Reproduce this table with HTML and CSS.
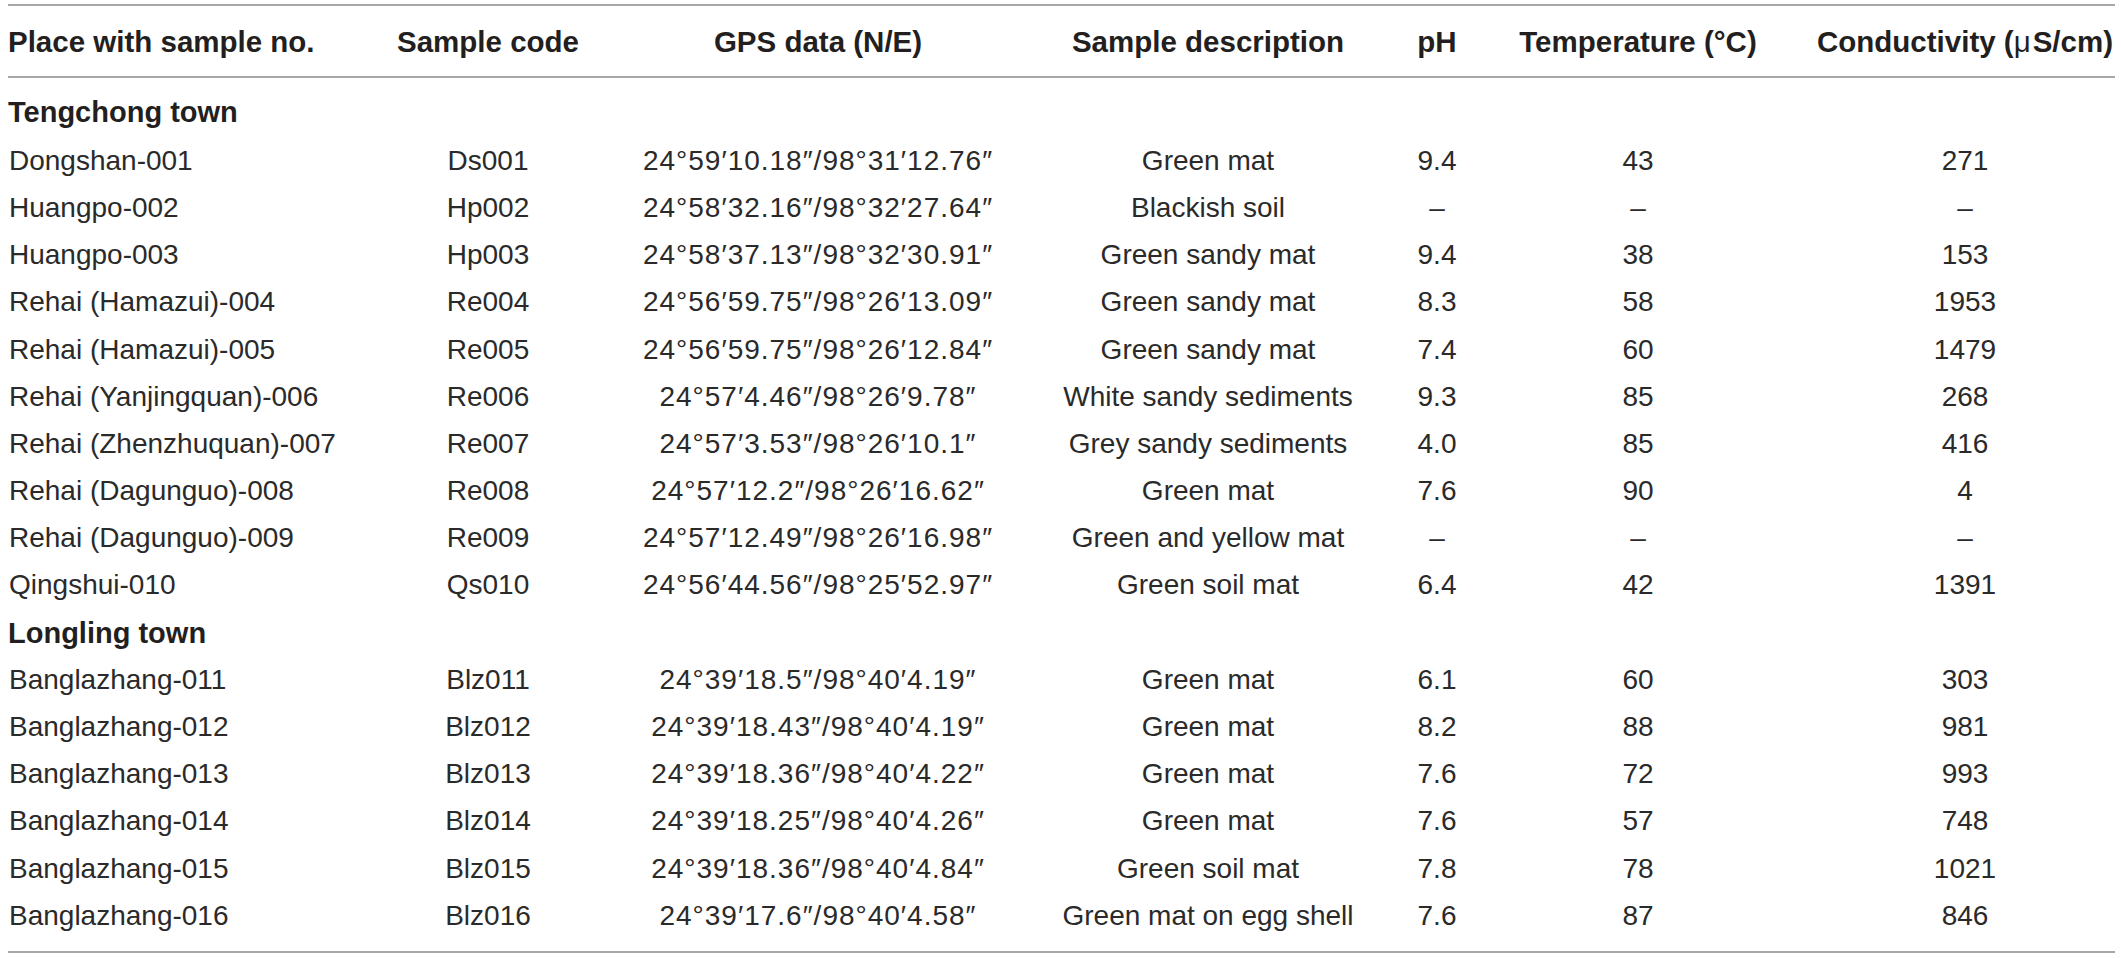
FILE: index.html
```html
<!DOCTYPE html>
<html lang="en">
<head>
<meta charset="utf-8">
<title>Sampling sites</title>
<link rel="stylesheet" href="styles.css">
</head>
<body>
<div class="page">
<table class="tbl">
  <colgroup>
    <col class="w-place"><col class="w-code"><col class="w-gps"><col class="w-desc"><col class="w-ph"><col class="w-temp"><col class="w-cond">
  </colgroup>
  <thead>
    <tr>
      <th class="left">Place with sample no.</th>
      <th>Sample code</th>
      <th>GPS data (N/E)</th>
      <th>Sample description</th>
      <th>pH</th>
      <th>Temperature (°C)</th>
      <th>Conductivity (<span class="mu">μ</span>S/cm)</th>
    </tr>
  </thead>
  <tbody>
    <tr class="group first"><td colspan="7">Tengchong town</td></tr>
    <tr><td>Dongshan-001</td><td>Ds001</td><td class="gps">24°59′10.18″/98°31′12.76″</td><td>Green mat</td><td>9.4</td><td>43</td><td>271</td></tr>
    <tr><td>Huangpo-002</td><td>Hp002</td><td class="gps">24°58′32.16″/98°32′27.64″</td><td>Blackish soil</td><td>–</td><td>–</td><td>–</td></tr>
    <tr><td>Huangpo-003</td><td>Hp003</td><td class="gps">24°58′37.13″/98°32′30.91″</td><td>Green sandy mat</td><td>9.4</td><td>38</td><td>153</td></tr>
    <tr><td>Rehai (Hamazui)-004</td><td>Re004</td><td class="gps">24°56′59.75″/98°26′13.09″</td><td>Green sandy mat</td><td>8.3</td><td>58</td><td>1953</td></tr>
    <tr><td>Rehai (Hamazui)-005</td><td>Re005</td><td class="gps">24°56′59.75″/98°26′12.84″</td><td>Green sandy mat</td><td>7.4</td><td>60</td><td>1479</td></tr>
    <tr><td>Rehai (Yanjingquan)-006</td><td>Re006</td><td class="gps">24°57′4.46″/98°26′9.78″</td><td>White sandy sediments</td><td>9.3</td><td>85</td><td>268</td></tr>
    <tr><td>Rehai (Zhenzhuquan)-007</td><td>Re007</td><td class="gps">24°57′3.53″/98°26′10.1″</td><td>Grey sandy sediments</td><td>4.0</td><td>85</td><td>416</td></tr>
    <tr><td>Rehai (Dagunguo)-008</td><td>Re008</td><td class="gps">24°57′12.2″/98°26′16.62″</td><td>Green mat</td><td>7.6</td><td>90</td><td>4</td></tr>
    <tr><td>Rehai (Dagunguo)-009</td><td>Re009</td><td class="gps">24°57′12.49″/98°26′16.98″</td><td>Green and yellow mat</td><td>–</td><td>–</td><td>–</td></tr>
    <tr><td>Qingshui-010</td><td>Qs010</td><td class="gps">24°56′44.56″/98°25′52.97″</td><td>Green soil mat</td><td>6.4</td><td>42</td><td>1391</td></tr>
    <tr class="group"><td colspan="7">Longling town</td></tr>
    <tr><td>Banglazhang-011</td><td>Blz011</td><td class="gps">24°39′18.5″/98°40′4.19″</td><td>Green mat</td><td>6.1</td><td>60</td><td>303</td></tr>
    <tr><td>Banglazhang-012</td><td>Blz012</td><td class="gps">24°39′18.43″/98°40′4.19″</td><td>Green mat</td><td>8.2</td><td>88</td><td>981</td></tr>
    <tr><td>Banglazhang-013</td><td>Blz013</td><td class="gps">24°39′18.36″/98°40′4.22″</td><td>Green mat</td><td>7.6</td><td>72</td><td>993</td></tr>
    <tr><td>Banglazhang-014</td><td>Blz014</td><td class="gps">24°39′18.25″/98°40′4.26″</td><td>Green mat</td><td>7.6</td><td>57</td><td>748</td></tr>
    <tr><td>Banglazhang-015</td><td>Blz015</td><td class="gps">24°39′18.36″/98°40′4.84″</td><td>Green soil mat</td><td>7.8</td><td>78</td><td>1021</td></tr>
    <tr class="last"><td>Banglazhang-016</td><td>Blz016</td><td class="gps">24°39′17.6″/98°40′4.58″</td><td>Green mat on egg shell</td><td>7.6</td><td>87</td><td>846</td></tr>
  </tbody>
</table>
</div>
</body>
</html>
```

FILE: styles.css
```css
html, body {
  margin: 0;
  padding: 0;
  background: #ffffff;
}

.page {
  padding: 4px 6px 0 8px;
}

.tbl {
  table-layout: fixed;
  border-collapse: collapse;
  width: 2107px;
  font-family: "Liberation Sans", Arial, sans-serif;
  font-size: 28px;
  line-height: 32px;
  color: #2a2a2a;
}

.w-place { width: 335px; }
.w-code { width: 290px; }
.w-gps { width: 370px; }
.w-desc { width: 410px; }
.w-ph { width: 48px; }
.w-temp { width: 354px; }
.w-cond { width: 300px; }

.tbl thead tr {
  border-top: 2px solid #a7a7a7;
  border-bottom: 2px solid #a7a7a7;
}

.tbl th {
  font-size: 29.5px;
  font-weight: bold;
  text-align: center;
  color: #231f20;
  padding: 20px 0 18px;
  white-space: nowrap;
}

.tbl th.left {
  text-align: left;
  padding-left: 0;
}

.mu {
  font-weight: normal;
  margin-right: 2px;
}

.tbl td {
  padding: 7.6px 0;
  text-align: center;
  white-space: nowrap;
}

.tbl td:first-child {
  text-align: left;
  padding-left: 1px;
}

.tbl td.gps {
  letter-spacing: 1px;
}

.tbl tr.group td {
  font-size: 29px;
  font-weight: bold;
  color: #231f20;
  padding-left: 0;
}

.tbl tr.first td {
  padding-top: 17.6px;
  padding-bottom: 9.6px;
}

.tbl tr.last td {
  padding-bottom: 19.1px;
}

.tbl tbody tr.last {
  border-bottom: 2px solid #a7a7a7;
}
```
